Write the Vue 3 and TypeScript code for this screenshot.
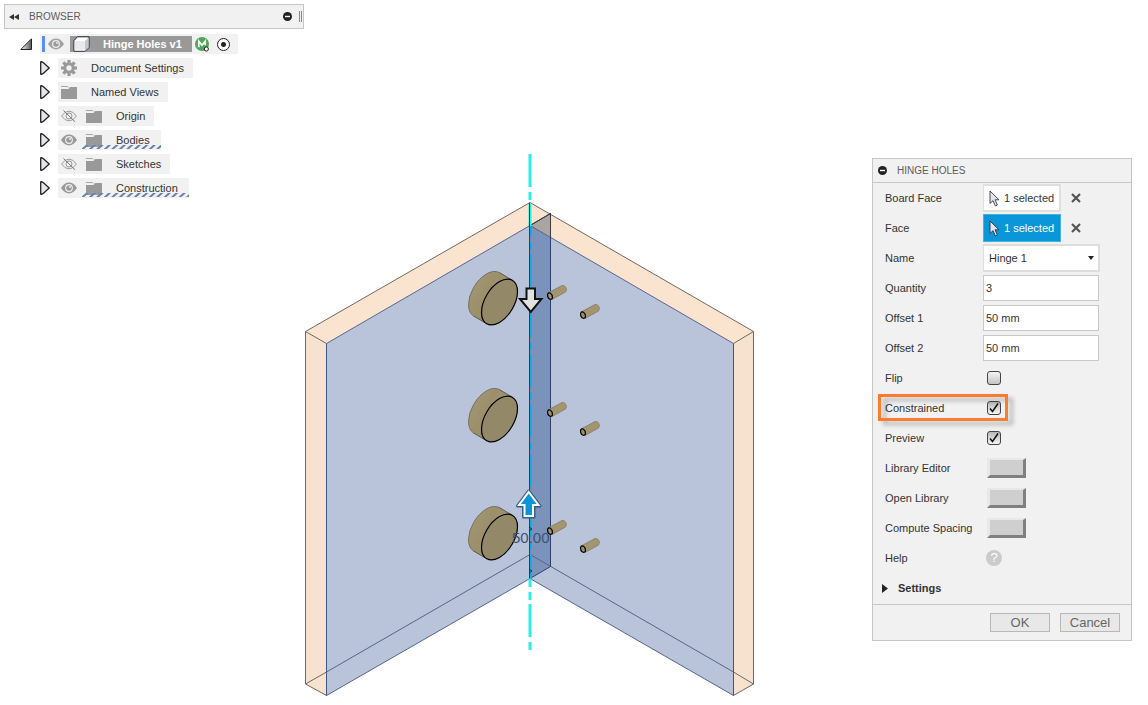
<script setup lang="ts">
import { ref } from 'vue'

interface TreeNode {
  label: string
  icon: 'gear' | 'folder'
  visible?: boolean
  marked?: boolean
}

const nodes: TreeNode[] = [
  { label: 'Document Settings', icon: 'gear' },
  { label: 'Named Views', icon: 'folder' },
  { label: 'Origin', icon: 'folder', visible: false },
  { label: 'Bodies', icon: 'folder', visible: true, marked: true },
  { label: 'Sketches', icon: 'folder', visible: false },
  { label: 'Construction', icon: 'folder', visible: true, marked: true },
]

const hingeName = ref('Hinge 1')
const fields = ref([
  { id: 'quantity', label: 'Quantity', value: '3' },
  { id: 'offset-1', label: 'Offset 1', value: '50 mm' },
  { id: 'offset-2', label: 'Offset 2', value: '50 mm' },
])
const checks = ref([
  { id: 'flip', label: 'Flip', on: false, framed: false },
  { id: 'constrained', label: 'Constrained', on: true, framed: true },
  { id: 'preview', label: 'Preview', on: true, framed: false },
])
const selections = [
  { id: 'board-face', label: 'Board Face', active: false },
  { id: 'face', label: 'Face', active: true },
]
const actions = [
  { id: 'library-editor', label: 'Library Editor' },
  { id: 'open-library', label: 'Open Library' },
  { id: 'compute-spacing', label: 'Compute Spacing' },
]

const cups = [302, 419, 537]
const pins = [
  { x: 550, y: 296 }, { x: 583, y: 315 },
  { x: 550, y: 413 }, { x: 583, y: 432 },
  { x: 550, y: 531 }, { x: 583, y: 549 },
]
const gearTeeth = [0, 45, 90, 135, 180, 225, 270, 315]
</script>

<template>
  <main class="workspace">
    <section class="browser" aria-label="Browser">
      <header class="browser-bar">
        <button class="bare" type="button" aria-label="Collapse browser">
          <svg width="10" height="6" viewBox="0 0 10 6"><path d="M5 0v6L0 3zM10 0v6L5 3z" fill="#333" /></svg>
        </button>
        <h2>BROWSER</h2>
        <button class="bare push" type="button" aria-label="Minimize browser">
          <svg width="9" height="9" viewBox="0 0 9 9"><circle cx="4.500" cy="4.500" r="4.500" fill="#222" /><path d="M2 4.500h5" stroke="#fff" stroke-width="1.400" /></svg>
        </button>
        <span class="grip"></span>
      </header>

      <ul class="tree">
        <li class="node root">
          <button class="bare" type="button" aria-label="Collapse Hinge Holes v1">
            <svg width="12" height="12" viewBox="0 0 12 12">
              <defs><linearGradient id="rootTri" x1="0" x2="1"><stop offset="0" stop-color="#fff" /><stop offset="1" stop-color="#555" /></linearGradient></defs>
              <path d="M11.500 0.800v10.700H0.800z" fill="url(#rootTri)" stroke="#222" />
            </svg>
          </button>
          <div class="pill root-pill">
            <span class="marker"></span>
            <button class="bare" type="button" aria-label="Toggle visibility">
              <svg width="16" height="12" viewBox="0 0 16 12"><path d="M0 6Q3.500 0.600 8 0.600T16 6Q12.500 11.400 8 11.400T0 6z" fill="#a2a2a2" /><circle cx="8" cy="6" r="3.900" fill="#f1f1f1" /><circle cx="8" cy="6" r="2.700" fill="#999" /><circle cx="9" cy="5" r="0.900" fill="#f1f1f1" /></svg>
            </button>
            <div class="root-name">
              <svg width="17" height="16" viewBox="0 0 17 16">
                <path d="M1 4.500L4.500 0.800H16v10.700l-4 3.700H1z" fill="#fff" stroke="#222" stroke-linejoin="round" />
                <path d="M12 5v10l3.500-3.600V1.500z" fill="#c3c5d2" />
                <path d="M1.500 5H12v9.700H1.500z" fill="#e9e9f0" />
              </svg>
              <span>Hinge Holes v1</span>
            </div>
            <svg class="badge" width="15" height="15" viewBox="0 0 15 15">
              <circle cx="7" cy="7" r="7" fill="#4fa65a" />
              <path d="M3.800 10.200V4.200L7 8.200l3.200-4v4" fill="none" stroke="#fff" stroke-width="1.700" />
              <circle cx="11.300" cy="12" r="2.100" fill="#fff" stroke="#222" stroke-width="1" />
            </svg>
            <input class="activate" type="radio" name="active-component" checked aria-label="Activate Hinge Holes v1" />
          </div>
        </li>

        <li v-for="node in nodes" :key="node.label" class="node">
          <button class="bare" type="button" :aria-label="'Expand ' + node.label">
            <svg width="10" height="14" viewBox="0 0 10 14"><path d="M0.700 0.800Q2.500 0.500 4 2.200L9.200 7 4 11.800Q2.500 13.500 0.700 13.200z" fill="#e6e6ea" stroke="#222" stroke-width="1.300" stroke-linejoin="round" /></svg>
          </button>
          <div class="pill" :class="{ marked: node.marked }">
            <button v-if="node.visible !== undefined" class="bare eye" type="button" :aria-label="'Toggle visibility of ' + node.label">
              <svg v-if="node.visible" width="16" height="12" viewBox="0 0 16 12"><path d="M0 6Q3.500 0.600 8 0.600T16 6Q12.500 11.400 8 11.400T0 6z" fill="#999" /><circle cx="8" cy="6" r="3.900" fill="#f1f1f1" /><circle cx="8" cy="6" r="2.800" fill="#999" /><circle cx="9" cy="5" r="0.900" fill="#f1f1f1" /></svg>
              <svg v-else width="16" height="12" viewBox="0 0 16 12"><path d="M0.600 6Q4 1.100 8 1.100T15.400 6Q12 10.900 8 10.900T0.600 6z" fill="none" stroke="#999" /><circle cx="8" cy="6" r="3" fill="none" stroke="#999" /><path d="M2.500 0.500L14 11.700" stroke="#777" /></svg>
            </button>
            <svg v-if="node.icon === 'gear'" width="16" height="16" viewBox="0 0 16 16">
              <rect v-for="a in gearTeeth" :key="a" x="6.400" y="0" width="3.200" height="4" fill="#999" :transform="`rotate(${a} 8 8)`" />
              <circle cx="8" cy="8" r="4.200" fill="none" stroke="#999" stroke-width="3" />
            </svg>
            <svg v-else width="16" height="13" viewBox="0 0 16 13">
              <path d="M0 3h7.500L9 1h7v12H0z" fill="#999" />
              <path d="M0 0.500h6.500l1 1" fill="none" stroke="#a4a4a4" />
            </svg>
            <span class="node-label">{{ node.label }}</span>
          </div>
        </li>
      </ul>
    </section>

    <section class="canvas" aria-label="Model view">
      <svg width="452" height="550" viewBox="304 150 452 550">
        <defs>
          <linearGradient id="cupSide" x1="0" x2="1" y1="0" y2="1"><stop offset="0" stop-color="#a39674" /><stop offset="1" stop-color="#94875f" /></linearGradient>
        </defs>
        <path d="M530 202.500L753.500 331.500v352.500l-20 11.500V343.500L530 225.500 326.500 343.500v352l-21-11.500V331.500z" fill="#fbe4cf" />
        <path d="M733.500 343.500l20-12v352.500l-20 11.500zM326.500 343.500l-21-12v352.500l21 11.500z" fill="#f6e2cf" />
        <path d="M530 225.500L326.500 343.500v352L530 578.500l203.500 117v-352z" fill="#b9c4da" />
        <path d="M530 225.500l20.500-12v353l-20.500 12z" fill="#7b93bb" />
        <path d="M530 225.500l20.500-12v24z" fill="#aaa5a3" />

        <g fill="none" stroke="#72685e" stroke-width="1">
          <path d="M530 202.500L305.500 331.500v352.500l21 11.500M530 202.500l223.500 129v352.500l-20 11.500M305.500 331.500l21 12M753.500 331.500l-20 12" />
          <path d="M305.500 684l21-12M753.500 684l-20-12" />
        </g>
        <g fill="none" stroke="#56658b" stroke-width="1">
          <path d="M530 225.500L326.500 343.500M530 225.500l203.500 118M326.500 695.500L530 578.500l203.500 117M326.500 672L530 554.500 733.500 672" />
          <path d="M326.500 343.500v352M733.500 343.500v352" stroke="#3f5584" />
        </g>
        <path d="M530 225.500l20.500-12v353l-20.500 12" fill="none" stroke="#2b3f6c" />
        <path d="M530 225.500l20.500-12v24" fill="none" stroke="#3b3a3c" />

        <path d="M530 154v72" stroke="#2af0e6" stroke-width="3" stroke-dasharray="33 5 8 4" />
        <path d="M530 579v71" stroke="#2af0e6" stroke-width="3" stroke-dasharray="33 5 8 4" stroke-dashoffset="25" />
        <path d="M530.500 226v353" stroke="#8488aa" stroke-width="2" />
        <path d="M530.500 226v353" stroke="#10a9e4" stroke-width="2" stroke-dasharray="33 5 8 4" stroke-dashoffset="22" />
        <path d="M529.500 203v375" stroke="#16486e" />
        <path d="M529 527l3 2-3 2M529 569l3 2-3 2" fill="none" stroke="#16335e" />

        <g v-for="y in cups" :key="y" :transform="`translate(499.500 ${y})`">
          <circle r="1" transform="matrix(18,-10.400,0,20.400,-13,-7.700)" vector-effect="non-scaling-stroke" fill="url(#cupSide)" stroke="#77715f" />
          <path d="M-0.100 -29.400L12.900 -21.700-12.900 21.700-25.900 14z" fill="url(#cupSide)" />
          <path d="M-0.100 -29.400L12.900 -21.700M-25.900 14L-12.900 21.700" stroke="#5f5a4c" />
          <circle r="1" transform="matrix(18,-10.400,0,20.400,0,0)" vector-effect="non-scaling-stroke" fill="#938868" stroke="#000" stroke-width="1.200" />
        </g>

        <g v-for="(pin, i) in pins" :key="i" :transform="`translate(${pin.x} ${pin.y})`">
          <path d="M-1 -3.500L12 -10.500Q15.500 -11 16.500 -6.500L15.500 -4 2 3.500z" fill="#a39570" stroke="#857a5c" stroke-width="0.800" />
          <path d="M-2.500 -1.500Q-1.500 -4 0.500 -2.800T2.500 2Q1.500 4 -0.500 3T-2.500 -1.500z" fill="#a09270" stroke="#000" stroke-width="1.200" />
        </g>

        <text class="dimension" x="512" y="543">50.00</text>

        <path d="M526.500 288.500h8.500v10.500h6.500L530.800 312 520 299h6.500z" fill="#e2e2e2" stroke="#111" stroke-width="2" />
        <path d="M528.700 491L540 506h-6v11h-10.500v-11h-6z" fill="#0a96d8" stroke="#365f8e" stroke-width="3" stroke-linejoin="round" />
        <path d="M528.700 492L538.500 505h-5.500v11h-8.500v-11H519z" fill="#0a96d8" stroke="#fff" stroke-width="2" />
      </svg>
    </section>

    <form class="dialog" aria-labelledby="dialog-title" @submit.prevent>
      <header class="dialog-bar">
        <button class="bare" type="button" aria-label="Collapse dialog">
          <svg width="9" height="9" viewBox="0 0 9 9"><circle cx="4.500" cy="4.500" r="4.500" fill="#222" /><path d="M2 4.500h5" stroke="#fff" stroke-width="1.400" /></svg>
        </button>
        <h2 id="dialog-title">HINGE HOLES</h2>
      </header>

      <div class="rows">
        <div v-for="s in selections" :key="s.id" class="row">
          <label :for="s.id">{{ s.label }}</label>
          <button :id="s.id" type="button" class="pick" :class="{ active: s.active }">
            <svg width="11" height="17" viewBox="0 0 11 17"><path d="M1 1v12.500l3-2.800 2.400 5.300 2-1-2.400-5.200H10z" fill="#e4e4ea" :stroke="s.active ? '#26425c' : '#444a58'" stroke-linejoin="round" /></svg>
            1 selected
          </button>
          <button type="button" class="bare clear" :aria-label="'Clear ' + s.label">
            <svg width="10" height="10" viewBox="0 0 10 10"><path d="M1 1l8 8M9 1L1 9" stroke="#555" stroke-width="2.200" /></svg>
          </button>
        </div>

        <div class="row">
          <label for="hinge-name">Name</label>
          <div class="select-box">
            <select id="hinge-name" v-model="hingeName"><option>Hinge 1</option></select>
            <svg width="6" height="4" viewBox="0 0 6 4"><path d="M0 0h6L3 4z" fill="#222" /></svg>
          </div>
        </div>

        <div v-for="f in fields" :key="f.id" class="row">
          <label :for="f.id">{{ f.label }}</label>
          <input :id="f.id" v-model="f.value" class="field" type="text" />
        </div>

        <div v-for="c in checks" :key="c.id" class="row" :class="{ framed: c.framed }">
          <label :for="c.id">{{ c.label }}</label>
          <span class="check">
            <input :id="c.id" v-model="c.on" type="checkbox" />
            <svg v-if="c.on" width="14" height="14" viewBox="0 0 14 14"><path d="M3 7.500L5.500 10.500 11 2.500" fill="none" stroke="#111" stroke-width="1.500" /></svg>
          </span>
        </div>

        <div v-for="a in actions" :key="a.id" class="row">
          <label :for="a.id">{{ a.label }}</label>
          <button :id="a.id" type="button" class="bevel"></button>
        </div>

        <div class="row">
          <label for="help">Help</label>
          <button id="help" type="button" class="help">?</button>
        </div>

        <button type="button" class="settings">
          <svg width="6" height="9" viewBox="0 0 6 9"><path d="M0 0l6 4.500L0 9z" fill="#222" /></svg>
          Settings
        </button>
      </div>

      <footer class="dialog-foot">
        <button type="submit">OK</button>
        <button type="button">Cancel</button>
      </footer>
    </form>
  </main>
</template>

<style>
body {
  margin: 0;
  background: #fff;
}
</style>

<style scoped>
.workspace {
  box-sizing: border-box;
  min-height: 100vh;
  display: grid;
  grid-template-columns: 300px 1fr 260px;
  align-items: start;
  padding: 4px 16px 0 4px;
  font: 11px/14px "Liberation Sans", Arial, sans-serif;
  color: #333;
}
.workspace *,
.workspace *::after {
  box-sizing: border-box;
}
svg {
  display: block;
  flex: none;
}
button,
input,
select {
  font: inherit;
  color: inherit;
  margin: 0;
}
.bare {
  display: block;
  padding: 0;
  border: 0;
  background: none;
}
h2 {
  margin: 0;
  font-size: 10px;
  font-weight: 400;
  color: #5c5c5c;
}

.browser-bar {
  display: flex;
  align-items: center;
  height: 25px;
  padding: 0 1px 0 4px;
  gap: 10px;
  border: 1px solid #c6c6c6;
  background: #f1f1f1;
}
.push {
  margin-left: auto;
}
.grip {
  width: 3px;
  height: 11px;
  margin-left: -3px;
  border: solid #888;
  border-width: 0 1px;
}
.tree {
  display: grid;
  gap: 4px;
  margin: 5px 0 0;
  padding: 0;
  list-style: none;
}
.node {
  display: flex;
  align-items: center;
  gap: 8px;
  padding-left: 36px;
}
.node.root {
  padding-left: 16px;
}
.pill {
  position: relative;
  display: flex;
  align-items: center;
  height: 20px;
  padding: 0 9px 0 3px;
  background: #f1f1f1;
}
.pill.marked {
  padding-right: 11px;
}
.eye {
  margin-right: 9px;
}
.node-label {
  margin-left: 14px;
}
.marked::after {
  content: "";
  position: absolute;
  left: 24px;
  right: 0;
  bottom: 1px;
  height: 4px;
  background: repeating-linear-gradient(138deg, transparent 0 2px, #6580ad 3px 4px, transparent 5px);
}
.pill.root-pill {
  padding: 0 8px 0 2px;
}
.marker {
  width: 3px;
  height: 16px;
  margin-right: 3px;
  background: #5b8def;
}
.root-name {
  display: flex;
  align-items: center;
  gap: 13px;
  height: 16px;
  margin-left: 6px;
  padding: 0 10px 0 3px;
  background: #999;
  color: #fff;
  font-weight: 700;
}
.badge {
  margin: 0 7px 0 3px;
}
.activate {
  appearance: none;
  width: 13px;
  height: 13px;
  border: 1px solid #222;
  border-radius: 50%;
  background: radial-gradient(circle, #222 0 2px, #fff 3px);
}

.canvas {
  margin-top: 146px;
}
.dimension {
  font: 15px "Liberation Sans", Arial, sans-serif;
  fill: #3f4f78;
}

.dialog {
  margin-top: 154px;
  border: 1px solid #c6c6c6;
  background: #f1f1f1;
}
.dialog-bar {
  display: flex;
  align-items: center;
  gap: 10px;
  height: 24px;
  padding-left: 5px;
  border-bottom: 1px solid #c6c6c6;
}
.rows {
  padding-bottom: 1px;
}
.row {
  position: relative;
  display: grid;
  grid-template-columns: 110px auto 1fr;
  align-items: center;
  height: 30px;
}
.row > * {
  justify-self: start;
}
.row > label {
  padding-left: 12px;
}
.pick {
  display: flex;
  align-items: center;
  gap: 4px;
  width: 78px;
  height: 28px;
  padding: 0 0 0 5px;
  border: 2px solid #e0e0e0;
  border-left-width: 1px;
  background: #fff;
  white-space: nowrap;
}
.pick.active {
  border-color: #45b0e2;
  border-width: 1px;
  background: #0a96d8;
  color: #fff;
}
.clear {
  margin-left: 10px;
}
.select-box {
  position: relative;
}
.select-box select,
.field {
  display: block;
  width: 117px;
  height: 28px;
  padding: 0 5px;
  border: 2px solid #dedede;
  border-left-width: 1px;
  border-radius: 0;
  background: #fff;
}
.select-box select {
  appearance: none;
}
.select-box svg {
  position: absolute;
  right: 6px;
  top: 12px;
  pointer-events: none;
}
.field {
  width: 116px;
  height: 26px;
  padding: 0 2px;
  border: 1px solid #c8c8c8;
}
.check {
  position: relative;
  margin-left: 4px;
}
.check input {
  appearance: none;
  display: block;
  width: 14px;
  height: 14px;
  border: 1px solid #444;
  border-radius: 3px;
  background: linear-gradient(#b8b8b8, #f4f4f4);
}
.check input:not(:checked) {
  background: linear-gradient(#f4f4f4, #c4c4c4);
}
.check svg {
  position: absolute;
  inset: 0;
  pointer-events: none;
}
.framed::after {
  content: "";
  position: absolute;
  left: 5px;
  top: 1px;
  width: 130px;
  height: 27px;
  border: 3px solid #ff7b30;
  filter: drop-shadow(5px 4px 2px rgba(0, 0, 0, 0.25));
  pointer-events: none;
}
.bevel {
  width: 39px;
  height: 20px;
  margin-left: 4px;
  padding: 0;
  border: solid;
  border-width: 2px 3px 3px;
  border-color: #e8e8e8 #808080 #808080 #e8e8e8;
  background: #cfcfcf;
}
.help {
  width: 16px;
  height: 16px;
  margin-left: 3px;
  padding: 0;
  border: 0;
  border-radius: 50%;
  background: #cbcbcb;
  color: #fff;
  font-size: 13px;
  line-height: 16px;
}
.settings {
  display: flex;
  align-items: center;
  gap: 10px;
  height: 30px;
  padding: 0 0 0 9px;
  border: 0;
  background: none;
  font-weight: 700;
}
.dialog-foot {
  display: flex;
  justify-content: flex-end;
  gap: 10px;
  padding: 8px 11px;
  border-top: 1px solid #c6c6c6;
}
.dialog-foot button {
  width: 60px;
  height: 19px;
  padding: 0;
  border: 1px solid #b8b8b8;
  background: #e8e8e8;
  color: #666;
  font-size: 13px;
}
</style>
